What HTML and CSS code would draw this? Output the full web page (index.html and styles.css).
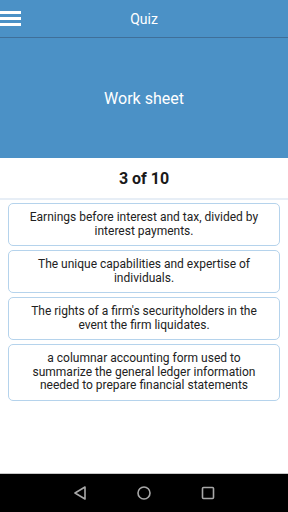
FILE: index.html
```html
<!DOCTYPE html>
<html lang="en">
<head>
    <meta charset="UTF-8">
    <meta name="viewport" content="width=device-width, initial-scale=1.0">
    <title>Quiz</title>
    <link rel="stylesheet" href="styles.css">
</head>
<body>
    <div class="screen">
        <div class="toolbar">
            <span class="menu"><i></i><i></i><i></i></span>
            <span class="title">Quiz</span>
        </div>
        <div class="banner">Work sheet</div>
        <div class="count">3 of 10</div>
        <div class="divider"></div>
        <div class="answers">
            <div class="card">Earnings before interest and tax, divided by interest payments.</div>
            <div class="card">The unique capabilities and expertise of individuals.</div>
            <div class="card">The rights of a firm's securityholders in the event the firm liquidates.</div>
            <div class="card">a columnar accounting form used to summarize the general ledger information needed to prepare financial statements</div>
        </div>
        <div class="navbar">
            <svg width="16" height="16" viewBox="0 0 16 16"><path d="M13 2 L3 8 L13 14 Z" fill="none" stroke="#a8a8a8" stroke-width="1.6" stroke-linejoin="round"/></svg>
            <svg width="16" height="16" viewBox="0 0 16 16"><circle cx="8" cy="8" r="6" fill="none" stroke="#a8a8a8" stroke-width="1.6"/></svg>
            <svg width="16" height="16" viewBox="0 0 16 16"><rect x="2.5" y="2.5" width="11" height="11" rx="1" fill="none" stroke="#a8a8a8" stroke-width="1.6"/></svg>
        </div>
    </div>
</body>
</html>
```

FILE: styles.css
```css
body {
    margin: 0;
    font-family: Roboto, "Liberation Sans", sans-serif;
}
.screen {
    width: 288px;
    height: 512px;
    display: flex;
    flex-direction: column;
    background: #fff;
}
.toolbar {
    height: 37px;
    background: #4b91c6;
    border-bottom: 1px solid #3f6f99;
    display: flex;
    align-items: center;
    justify-content: center;
    position: relative;
}
.menu {
    position: absolute;
    left: 0;
    top: 11px;
    display: flex;
    flex-direction: column;
    gap: 3px;
}
.menu i {
    display: block;
    width: 21px;
    height: 3px;
    background: #fff;
}
.title {
    color: #fff;
    font-size: 14px;
}
.banner {
    height: 120px;
    background: #4b91c6;
    color: #fff;
    font-size: 16px;
    display: flex;
    align-items: center;
    justify-content: center;
}
.count {
    height: 40px;
    display: flex;
    align-items: center;
    justify-content: center;
    font-size: 16px;
    font-weight: bold;
    color: #1a1a1a;
}
.divider {
    height: 2px;
    background: #e7eef6;
}
.answers {
    flex: 1;
    display: flex;
    flex-direction: column;
    gap: 4px;
    padding: 3px 8px 0;
}
.card {
    border: 1px solid #b5d3ec;
    border-radius: 5px;
    padding: 7px 10px;
    text-align: center;
    font-size: 12px;
    line-height: 13.5px;
    color: #222;
}
.navbar {
    height: 38px;
    background: #000;
    border-top: 1px solid #c8c8c8;
    display: flex;
    align-items: center;
    justify-content: center;
    gap: 48px;
}
```
